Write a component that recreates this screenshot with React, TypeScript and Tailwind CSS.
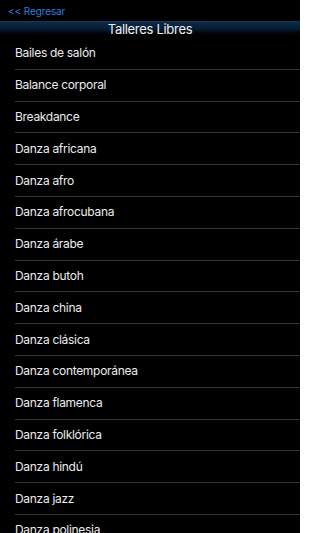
import React from "react";

const items = [
  "Bailes de salón",
  "Balance corporal",
  "Breakdance",
  "Danza africana",
  "Danza afro",
  "Danza afrocubana",
  "Danza árabe",
  "Danza butoh",
  "Danza china",
  "Danza clásica",
  "Danza contemporánea",
  "Danza flamenca",
  "Danza folklórica",
  "Danza hindú",
  "Danza jazz",
  "Danza polinesia",
  "Danza tahitiana",
];

export default function App() {
  return (
    <div
      className="w-[300px] h-[533px] overflow-hidden bg-black text-white"
      style={{ fontFamily: "Inter, 'Liberation Sans', sans-serif" }}
    >
      <div className="h-[21px] flex items-center pl-[8px] pt-[1px] text-[10px] tracking-[-0.1px] text-[#2f7fe0]">
        &lt;&lt; Regresar
      </div>
      <div className="h-[16px] flex items-center justify-center text-[13px] tracking-[-0.3px] text-[#f0f0f0] bg-gradient-to-b from-[#0c2a48] via-[#071a2e] to-black border-t border-[#143555]">
        Talleres Libres
      </div>
      <div>
        {items.map((t, i) => (
          <div key={t} className="pl-[15px]">
            <div
              className={
                "h-[31.8px] flex items-center text-[12px] tracking-[-0.3px] text-[#ececec] " +
                (i === 0 ? "" : "border-t border-[#333333]")
              }
            >
              {t}
            </div>
          </div>
        ))}
      </div>
    </div>
  );
}
